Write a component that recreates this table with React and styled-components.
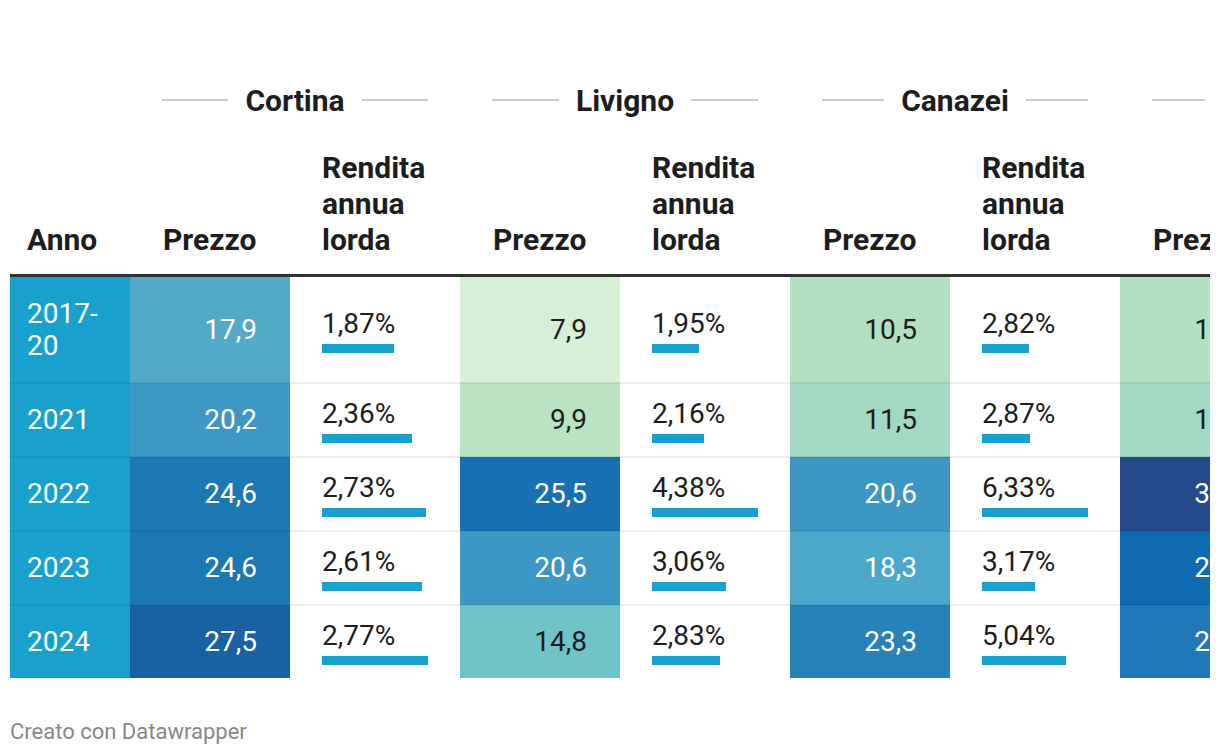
import React from 'react';
import styled, {createGlobalStyle} from 'styled-components';

const GlobalStyle = createGlobalStyle`
  html, body {
    margin: 0;
    padding: 0;
    background: #fff;
  }
  body {
    font-family: Roboto, "Liberation Sans", Arial, sans-serif;
    color: #1d1d1d;
  }
`;

const Page = styled.div`
  padding: 82px 10px 0 10px;
  width: 1200px;
`;

const Scroller = styled.div`
  width: 1200px;
  overflow: hidden;
`;

const Table = styled.table`
  border-collapse: collapse;
  table-layout: fixed;
  width: 1400px;
`;

const GroupCell = styled.th`
  padding: 0 32px;
  height: 36px;
  vertical-align: middle;
`;

const GroupTitle = styled.div`
  display: flex;
  align-items: center;
  gap: 17px;
  font-size: 30px;
  font-weight: 700;
  white-space: nowrap;
  &::before, &::after {
    content: '';
    flex: 1;
    height: 2px;
    background: #cccccc;
  }
`;

const HeadCell = styled.th`
  font-size: 30px;
  font-weight: 700;
  line-height: 36px;
  text-align: left;
  vertical-align: bottom;
  padding: 32px ${props => props.$right ? 33 : 32}px 16px ${props => props.$first ? 17 : props.$right ? 33 : 32}px;
  border-bottom: 3px solid #333333;
`;

const Cell = styled.td`
  font-size: 28px;
  line-height: 32px;
  padding: ${props => props.$bar ? 13 : 20}px ${props => props.$right ? 33 : 32}px ${props => props.$bar ? 13 : 20}px ${props => props.$first ? 17 : 32}px;
  text-align: ${props => props.$right ? 'right' : 'left'};
  vertical-align: middle;
  background: ${props => props.$bg || 'transparent'};
  color: ${props => props.$light ? '#ffffff' : '#1d1d1d'};
  border-bottom: 2px solid rgba(0, 0, 0, 0.07);
  tr:first-child > & {
    padding-top: ${props => props.$bar ? 13 : 21}px;
  }
  tr:last-child > & {
    border-bottom: none;
  }
`;

const BarValue = styled.div`
  display: flex;
  flex-direction: column;
  align-items: flex-start;
  gap: 4px;
  line-height: 33px;
`;

const Bar = styled.div`
  height: 9px;
  background: #18a1cd;
`;

const Footer = styled.div`
  margin-top: 41px;
  font-size: 22px;
  color: #888888;
`;

const groups = [
  {
    name: 'Cortina',
    max: 2.77,
    rows: [
      {p: '17,9', bg: '#52aac8', light: true, r: 1.87},
      {p: '20,2', bg: '#3d98c3', light: true, r: 2.36},
      {p: '24,6', bg: '#1c78b3', light: true, r: 2.73},
      {p: '24,6', bg: '#1c78b3', light: true, r: 2.61},
      {p: '27,5', bg: '#1862a4', light: true, r: 2.77},
    ],
  },
  {
    name: 'Livigno',
    max: 4.38,
    rows: [
      {p: '7,9', bg: '#d5f0d5', r: 1.95},
      {p: '9,9', bg: '#b9e4c1', r: 2.16},
      {p: '25,5', bg: '#1770b2', light: true, r: 4.38},
      {p: '20,6', bg: '#3c97c4', light: true, r: 3.06},
      {p: '14,8', bg: '#70c3c6', r: 2.83},
    ],
  },
  {
    name: 'Canazei',
    max: 6.33,
    rows: [
      {p: '10,5', bg: '#b1e1c0', r: 2.82},
      {p: '11,5', bg: '#a1d9c3', r: 2.87},
      {p: '20,6', bg: '#3c97c4', light: true, r: 6.33},
      {p: '18,3', bg: '#4ba8c8', light: true, r: 3.17},
      {p: '23,3', bg: '#2682b8', light: true, r: 5.04},
    ],
  },
  {
    name: 'Madonna',
    max: 4.1,
    rows: [
      {p: '10,8', bg: '#b1e1c0', r: 2.41},
      {p: '11,6', bg: '#a1d9c3', r: 2.65},
      {p: '31,2', bg: '#254a8c', light: true, r: 4.1},
      {p: '26,4', bg: '#106aaf', light: true, r: 3.22},
      {p: '24,0', bg: '#2079b6', light: true, r: 3.35},
    ],
  },
];

const years = ['2017-20', '2021', '2022', '2023', '2024'];

const fmt = v => v.toFixed(2).replace('.', ',') + '%';

const App = () => {
  return (
    <>
      <GlobalStyle />
      <Page>
        <Scroller>
          <Table>
            <colgroup>
              <col style={{width: 120}} />
              {groups.map(g => (
                <React.Fragment key={g.name}>
                  <col style={{width: 160}} />
                  <col style={{width: 170}} />
                </React.Fragment>
              ))}
            </colgroup>
            <thead>
              <tr>
                <GroupCell />
                {groups.map(g => (
                  <GroupCell key={g.name} colSpan={2}>
                    <GroupTitle>{g.name}</GroupTitle>
                  </GroupCell>
                ))}
              </tr>
              <tr>
                <HeadCell $first>Anno</HeadCell>
                {groups.map(g => (
                  <React.Fragment key={g.name}>
                    <HeadCell $right>Prezzo</HeadCell>
                    <HeadCell>Rendita annua lorda</HeadCell>
                  </React.Fragment>
                ))}
              </tr>
            </thead>
            <tbody>
              {years.map((y, ri) => (
                <tr key={y}>
                  <Cell $first $bg="#18a1cd" $light>
                    {y === '2017-20' ? <>2017-<br />20</> : y}
                  </Cell>
                  {groups.map(g => {
                    const row = g.rows[ri];
                    return (
                      <React.Fragment key={g.name}>
                        <Cell $right $bg={row.bg} $light={row.light}>{row.p}</Cell>
                        <Cell $bar>
                          <BarValue>
                            <span>{fmt(row.r)}</span>
                            <Bar style={{width: Math.round(row.r / g.max * 106)}} />
                          </BarValue>
                        </Cell>
                      </React.Fragment>
                    );
                  })}
                </tr>
              ))}
            </tbody>
          </Table>
        </Scroller>
        <Footer>Creato con Datawrapper</Footer>
      </Page>
    </>
  );
};

export default App;
